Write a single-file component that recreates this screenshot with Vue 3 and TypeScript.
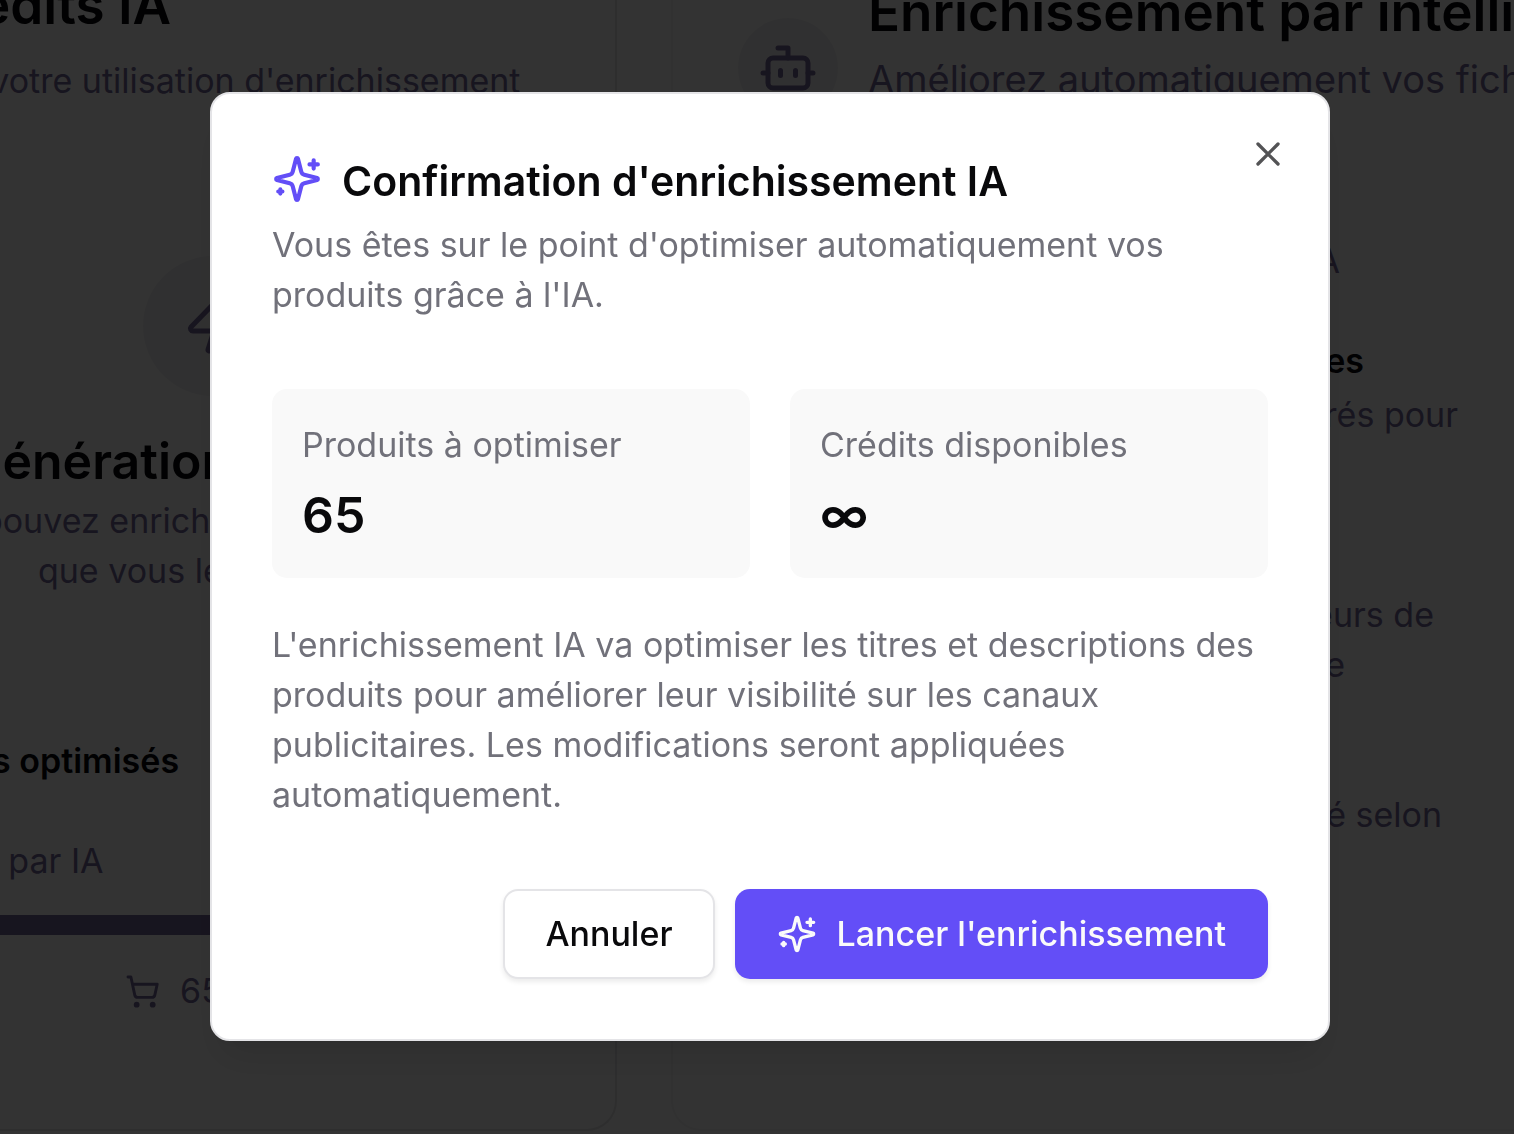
<script setup lang="ts">
import { ref } from 'vue'

interface Stat {
  label: string
  value: string
}

const stats: Stat[] = [
  { label: 'Produits à optimiser', value: '65' },
  { label: 'Crédits disponibles', value: '∞' },
]

const open = ref(true)
const close = (): void => {
  open.value = false
}
</script>

<template>
  <div class="page">
    <div class="cards" aria-hidden="true">
      <section class="card credits">
        <h2 class="credits-title">Crédits IA</h2>
        <p class="muted credits-sub">Suivez votre utilisation d'enrichissement</p>
        <div class="hero">
          <span class="hero-disc">
            <svg class="icon hero-icon" viewBox="0 0 24 24">
              <path d="M4 14a1 1 0 0 1-.78-1.63l9.9-10.2a.5.5 0 0 1 .86.46l-1.92 6.02A1 1 0 0 0 13 10h7a1 1 0 0 1 .78 1.63l-9.9 10.2a.5.5 0 0 1-.86-.46l1.92-6.02A1 1 0 0 0 11 14z" />
            </svg>
          </span>
          <h3 class="hero-title">Génération illimitée !</h3>
          <p class="muted">Vous pouvez enrichir autant de produits<br />que vous le souhaitez</p>
        </div>
        <p class="strong usage-title">Produits optimisés</p>
        <p class="muted by-ai">Enrichis par IA</p>
        <div class="bar"></div>
        <p class="muted count">
          <svg class="icon cart" viewBox="0 0 24 24">
            <circle cx="8" cy="21" r="1" />
            <circle cx="19" cy="21" r="1" />
            <path d="M2.05 2.05h2l2.66 12.42a2 2 0 0 0 2 1.58h9.78a2 2 0 0 0 1.95-1.57l1.65-7.43H5.12" />
          </svg>
          <span>65 / 65</span>
        </p>
      </section>

      <section class="card feature">
        <header class="feature-head">
          <span class="bot-disc">
            <svg class="icon bot" viewBox="0 0 24 24">
              <path d="M12 8V4H8" />
              <rect width="16" height="12" x="4" y="8" rx="2" />
              <path d="M2 14h2M20 14h2M15 13v2M9 13v2" />
            </svg>
          </span>
          <div class="feature-text">
            <h2 class="feature-title">Enrichissement par intelligence</h2>
            <p class="feature-sub">Améliorez automatiquement vos fiches</p>
          </div>
        </header>
        <p class="muted line end-a tag">Optimisation par IA</p>
        <p class="strong line end-b">Titres et annonces</p>
        <p class="muted line end-c">Des titres structurés pour</p>
        <p class="muted line end-d spaced">Avec les valeurs de</p>
        <p class="muted line end-e">recherche</p>
        <p class="muted line end-f last">Contenu adapté selon</p>
      </section>
    </div>

    <div v-if="open" class="overlay">
      <div class="dialog" role="dialog" aria-modal="true" aria-labelledby="dialog-title">
        <button class="close" type="button" aria-label="Fermer" @click="close">
          <svg class="icon" viewBox="0 0 24 24"><path d="M18 6 6 18M6 6l12 12" /></svg>
        </button>
        <h1 id="dialog-title" class="title">
          <svg class="icon title-icon" viewBox="0 0 24 24">
            <path d="M9.94 15.5A2 2 0 0 0 8.5 14.06l-6.14-1.58a.5.5 0 0 1 0-.96L8.5 9.94A2 2 0 0 0 9.94 8.5l1.58-6.14a.5.5 0 0 1 .96 0l1.58 6.14a2 2 0 0 0 1.44 1.44l6.14 1.58a.5.5 0 0 1 0 .96l-6.14 1.58a2 2 0 0 0-1.44 1.44l-1.58 6.14a.5.5 0 0 1-.96 0z" />
            <path d="M20 3v4M22 5h-4M4 17v2M5 18H3" />
          </svg>
          <span>Confirmation d'enrichissement IA</span>
        </h1>
        <p class="text intro">Vous êtes sur le point d'optimiser automatiquement vos produits grâce à l'IA.</p>

        <dl class="stats">
          <div v-for="stat in stats" :key="stat.label" class="stat">
            <dt>{{ stat.label }}</dt>
            <dd>{{ stat.value }}</dd>
          </div>
        </dl>

        <p class="text">
          L'enrichissement IA va optimiser les titres et descriptions des produits pour améliorer
          leur visibilité sur les canaux publicitaires. Les modifications seront appliquées
          automatiquement.
        </p>

        <div class="actions">
          <button class="btn outline" type="button" @click="close">Annuler</button>
          <button class="btn primary" type="button" @click="close">
            <svg class="icon btn-icon" viewBox="0 0 24 24">
              <path d="M9.94 15.5A2 2 0 0 0 8.5 14.06l-6.14-1.58a.5.5 0 0 1 0-.96L8.5 9.94A2 2 0 0 0 9.94 8.5l1.58-6.14a.5.5 0 0 1 .96 0l1.58 6.14a2 2 0 0 0 1.44 1.44l6.14 1.58a.5.5 0 0 1 0 .96l-6.14 1.58a2 2 0 0 0-1.44 1.44l-1.58 6.14a.5.5 0 0 1-.96 0z" />
              <path d="M20 3v4M22 5h-4M4 17v2M5 18H3" />
            </svg>
            <span>Lancer l'enrichissement</span>
          </button>
        </div>
      </div>
    </div>
  </div>
</template>

<style>
body {
  background: #fff;
}
</style>

<style scoped>
.page {
  height: 100vh;
  overflow: hidden;
  background: #fff;
  color: #09090b;
  font-family: Inter, "Liberation Sans", sans-serif;
  font-size: 34px;
  line-height: 50px;
}

.page * {
  box-sizing: border-box;
}

h1,
h2,
h3,
p,
dl,
dd {
  margin: 0;
}

.icon {
  display: block;
  flex: none;
  width: 40px;
  height: 40px;
  fill: none;
  stroke: currentColor;
  stroke-width: 2;
  stroke-linecap: round;
  stroke-linejoin: round;
}

/* Page content behind the dialog, scrolled past its left and top edges */
.cards {
  display: flex;
  gap: 54px;
  margin-left: -192px;
  white-space: nowrap;
}

.card {
  flex: none;
  margin-top: -60px;
  border: 2px solid #e4e4e7;
  border-top: 0;
  border-radius: 0 0 30px 30px;
}

.credits {
  width: 809px;
  padding: 40px 58px 113px;
}

.credits-title {
  padding-left: 52px;
  font-size: 53px;
  font-weight: 600;
  line-height: 50px;
}

.muted,
.feature-sub {
  color: #76699b;
}

.credits-sub {
  margin-top: 26px;
  padding-left: 6px;
}

.hero {
  display: flex;
  flex-direction: column;
  align-items: center;
  margin-top: 150px;
  text-align: center;
}

.hero-disc,
.bot-disc {
  display: flex;
  flex: none;
  align-items: center;
  justify-content: center;
  border-radius: 50%;
  background: #f1f1f3;
  color: #76699b;
}

.hero-disc {
  width: 140px;
  height: 140px;
}

.hero-icon {
  width: 60px;
  height: 60px;
}

.hero-title {
  margin: 30px 0 0;
  font-size: 50px;
  font-weight: 600;
  line-height: 70px;
}

.strong {
  font-weight: 600;
}

.usage-title {
  margin-top: 140px;
  padding-left: 6px;
}

.by-ai {
  margin-top: 50px;
  padding-left: 3px;
}

.bar {
  height: 20px;
  margin-top: 29px;
  background: #76699b;
}

.count {
  display: flex;
  align-items: center;
  justify-content: center;
  gap: 20px;
  margin-top: 31px;
  padding-right: 5px;
}

.cart {
  width: 35px;
  height: 35px;
}

.feature {
  width: 1100px;
  padding: 78px 65px 0;
  border-color: #f4f4f5;
}

.feature-head {
  display: flex;
  gap: 30px;
}

.bot-disc {
  width: 100px;
  height: 100px;
}

.bot {
  width: 60px;
  height: 60px;
}

.feature-text {
  margin-top: -31px;
}

.feature-title {
  font-size: 53px;
  font-weight: 600;
  line-height: 50px;
}

.feature-sub {
  margin-top: 12px;
  font-size: 38px;
  line-height: 60px;
}

.line {
  text-align: right;
}

.end-a { width: 602px; }
.end-b { width: 626px; }
.end-c { width: 720px; }
.end-d { width: 696px; }
.end-e { width: 607px; }
.end-f { width: 704px; }

.tag {
  margin-top: 118px;
}

.end-b {
  margin: 50px 0 4px;
}

.spaced {
  margin-top: 150px;
}

.last {
  margin-top: 100px;
}

/* Dialog */
.overlay {
  position: fixed;
  inset: 0;
  display: flex;
  align-items: center;
  justify-content: center;
  padding: 0 0 2px 26px;
  background: rgb(0 0 0 / 80%);
}

.dialog {
  position: relative;
  width: 1120px;
  max-width: 100%;
  padding: 60px;
  border: 2px solid #e4e4e7;
  border-radius: 20px;
  background: #fff;
  box-shadow: 0 25px 38px -8px rgb(0 0 0 / 10%), 0 10px 15px -10px rgb(0 0 0 / 10%);
}

.close {
  position: absolute;
  top: 40px;
  right: 40px;
  padding: 0;
  border: 0;
  background: none;
  color: #535355;
  cursor: pointer;
}

.title {
  display: flex;
  align-items: flex-start;
  gap: 20px;
  font-size: 41px;
  font-weight: 600;
  line-height: 54px;
}

.title-icon {
  width: 50px;
  height: 50px;
  color: #634ef7;
}

.text,
dt {
  color: #71717a;
}

.intro {
  margin-top: 12px;
}

.stats {
  display: grid;
  grid-template-columns: 1fr 1fr;
  gap: 40px;
  margin: 69px 0 42px;
}

.stat {
  padding: 31px 30px 28px;
  border-radius: 15px;
  background: #f9f9f9;
}

dd {
  margin-top: 10px;
  font-size: 50px;
  font-weight: 600;
  line-height: 70px;
}

.actions {
  display: flex;
  justify-content: flex-end;
  gap: 20px;
  margin-top: 69px;
}

.btn {
  display: flex;
  align-items: center;
  gap: 20px;
  height: 90px;
  padding: 0 42px;
  border: 0;
  border-radius: 15px;
  font: inherit;
  font-weight: 500;
  cursor: pointer;
  box-shadow: 0 3px 5px rgb(0 0 0 / 8%);
}

.outline {
  padding: 0 40px;
  border: 2px solid #e4e4e7;
  background: #fff;
  color: #09090b;
}

.primary {
  background: #634ef7;
  color: #fafafa;
}
</style>
